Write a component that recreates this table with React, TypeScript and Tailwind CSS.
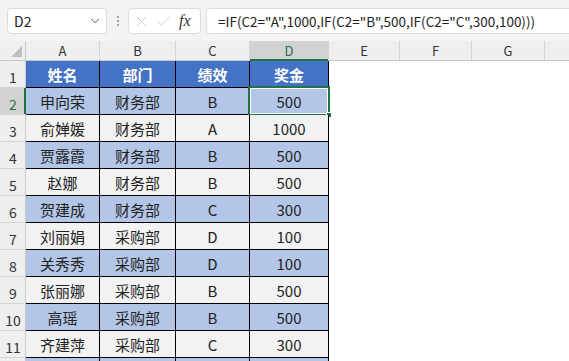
import React from 'react';
import { ChevronDown, X, Check } from 'lucide-react';

const rows = [
  ['申向荣', '财务部', 'B', '500'],
  ['俞婵媛', '财务部', 'A', '1000'],
  ['贾露霞', '财务部', 'B', '500'],
  ['赵娜', '财务部', 'B', '500'],
  ['贺建成', '财务部', 'C', '300'],
  ['刘丽娟', '采购部', 'D', '100'],
  ['关秀秀', '采购部', 'D', '100'],
  ['张丽娜', '采购部', 'B', '500'],
  ['高瑶', '采购部', 'B', '500'],
  ['齐建萍', '采购部', 'C', '300'],
  ['', '', '', ''],
];

// last header cell is the partly visible column past G
const cols = ['A', 'B', 'C', 'D', 'E', 'F', 'G', ''];
const widths = ['w-[74px]', 'w-[76px]', 'w-[74px]', 'w-[79px]', 'w-[71px]', 'w-[72px]', 'w-[73px]', 'w-[73px]'];

function FormulaBar() {
  return (
    <div className="flex h-[41px] items-start bg-[#f3f3f3] pt-[8px] pl-[7px]">
      <div className="flex h-[26px] w-[100px] items-center justify-between rounded-[4px] border border-[#dcdcdc] bg-white pl-[6px] pr-[4px] text-[14px] text-[#222]">
        <span>D2</span>
        <ChevronDown className="h-[14px] w-[14px] text-[#444]" strokeWidth={1.5} />
      </div>
      <div className="flex h-[26px] w-[21px] flex-col items-center justify-center gap-[2px]">
        <span className="h-[2px] w-[2px] rounded-full bg-[#888]" />
        <span className="h-[2px] w-[2px] rounded-full bg-[#888]" />
        <span className="h-[2px] w-[2px] rounded-full bg-[#888]" />
      </div>
      <div className="flex h-[26px] w-[73px] items-center rounded-[4px] border border-[#dcdcdc] bg-white pl-[4px]">
        <X className="h-[17px] w-[17px] text-[#c4c4c4]" strokeWidth={1.2} />
        <Check className="ml-[5px] h-[17px] w-[17px] text-[#c4c4c4]" strokeWidth={1.2} />
        <span className="ml-[7px] font-['Liberation_Serif',serif] text-[16px] italic text-[#333]">fx</span>
      </div>
      <div className="ml-[5px] flex h-[26px] flex-1 items-center rounded-l-[4px] border border-r-0 border-[#dcdcdc] bg-white pl-[11px] text-[13.5px] text-[#222]">
        =IF(C2="A",1000,IF(C2="B",500,IF(C2="C",300,100)))
      </div>
    </div>
  );
}

function Sheet() {
  return (
    <div className="bg-white">
      {/* column letters */}
      <div className="flex h-[20px] border-b border-[#c8c8c8] bg-[#efefef] text-[13px] text-[#333]">
        <div className="relative w-[26px] shrink-0 border-r border-[#c8c8c8]">
          <div className="absolute right-[3px] bottom-[3px] h-0 w-0 border-l-[11px] border-b-[11px] border-l-transparent border-b-[#c0c0c0]" />
        </div>
        {cols.map((c, i) => (
          <div
            key={i}
            className={`${widths[i]} flex shrink-0 items-end justify-center border-r border-[#d4d4d4] leading-[18px] ${
              c === 'D' ? 'relative bg-[#d2d2d2] text-[#217346]' : ''
            }`}
          >
            {c}
            {c === 'D' && <div className="absolute -bottom-px left-0 right-0 h-[2px] bg-[#217346]" />}
          </div>
        ))}
      </div>

      {/* header row */}
      <div className="flex h-[27px]">
        <RowNum n={1} />
        {['姓名', '部门', '绩效', '奖金'].map((t, i) => (
          <div
            key={t}
            className={`${widths[i]} flex shrink-0 items-center justify-center border-r border-b border-black bg-[#4472c4] pt-[2px] text-[15px] font-bold text-white`}
          >
            {t}
          </div>
        ))}
      </div>

      {rows.map((r, ri) => {
        const n = ri + 2;
        const bg = n % 2 === 0 ? 'bg-[#b4c6e7]' : 'bg-[#f2f2f2]';
        return (
          <div key={n} className="flex h-[27px]">
            <RowNum n={n <= 11 ? n : undefined} active={n === 2} />
            {r.map((t, ci) => (
              <div
                key={ci}
                className={`${widths[ci]} ${bg} relative flex shrink-0 items-center justify-center border-r border-b border-black pt-[3px] text-[15px] text-[#222]`}
              >
                {t}
                {n === 2 && ci === 3 && (
                  <div className="absolute -top-[2px] -left-[2px] -right-[2px] -bottom-[2px] border-2 border-[#217346]">
                    <div className="h-full w-full border border-white" />
                    <div className="absolute -right-[4px] -bottom-[4px] h-[6px] w-[6px] border border-white bg-[#217346]" />
                  </div>
                )}
              </div>
            ))}
          </div>
        );
      })}
    </div>
  );
}

function RowNum({ n, active }: { n?: number; active?: boolean }) {
  return (
    <div
      className={`relative flex w-[26px] shrink-0 items-end justify-center border-b border-[#d4d4d4] pb-[1px] text-[14px] leading-[18px] ${
        active ? 'bg-[#d2d2d2] text-[#217346]' : 'bg-[#efefef] text-[#333]'
      }`}
    >
      {n}
      <div className={`absolute top-0 right-0 bottom-0 ${active ? 'w-[2px] bg-[#217346]' : 'w-px bg-[#c8c8c8]'}`} />
    </div>
  );
}

export default function App() {
  return (
    <div className="h-[361px] w-[569px] overflow-hidden bg-white font-['Noto_Sans_CJK_SC',sans-serif]">
      <FormulaBar />
      <Sheet />
    </div>
  );
}
